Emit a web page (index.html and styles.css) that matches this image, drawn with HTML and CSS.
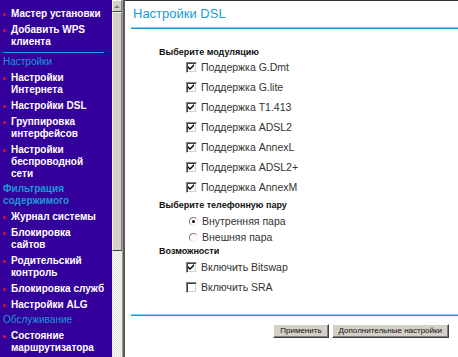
FILE: index.html
```html
<!DOCTYPE html>
<html lang="ru">

<head>
    <meta charset="UTF-8">
    <title>Настройки DSL</title>
    <link rel="stylesheet" href="styles.css">
</head>

<body>
    <div id="sidebar">
        <div class="nav-item"><span class="bullet"></span><a href="#">Мастер установки</a></div>
        <div class="nav-item"><span class="bullet"></span><a href="#">Добавить WPS<br>клиента</a></div>
        <div class="nav-sep"></div>
        <div class="nav-head">Настройки</div>
        <div class="nav-item"><span class="bullet"></span><a href="#">Настройки<br>Интернета</a></div>
        <div class="nav-item"><span class="bullet"></span><a href="#">Настройки DSL</a></div>
        <div class="nav-item"><span class="bullet"></span><a href="#">Группировка<br>интерфейсов</a></div>
        <div class="nav-item"><span class="bullet"></span><a href="#">Настройки<br>беспроводной<br>сети</a></div>
        <div class="nav-head bold">Фильтрация<br>содержимого</div>
        <div class="nav-item"><span class="bullet"></span><a href="#">Журнал системы</a></div>
        <div class="nav-item"><span class="bullet"></span><a href="#">Блокировка<br>сайтов</a></div>
        <div class="nav-item"><span class="bullet"></span><a href="#">Родительский<br>контроль</a></div>
        <div class="nav-item"><span class="bullet"></span><a href="#">Блокировка служб</a></div>
        <div class="nav-item"><span class="bullet"></span><a href="#">Настройки ALG</a></div>
        <div class="nav-head">Обслуживание</div>
        <div class="nav-item"><span class="bullet"></span><a href="#">Состояние<br>маршрутизатора</a></div>
    </div>

    <div id="scrollbar">
        <div class="sb-btn"><span class="sb-arrow"></span></div>
        <div class="sb-thumb"></div>
        <div class="sb-track"></div>
    </div>
    <div id="divider"></div>

    <div id="main">
        <div class="page-title">Настройки DSL</div>
        <div class="rule"></div>

        <div class="form">
            <div class="label">Выберите модуляцию</div>
            <div class="opt"><span class="cb"><svg viewBox="0 0 9 9"><polygon points="1,3 3,5 7,1 7,3 3,7 1,5"/></svg></span>Поддержка G.Dmt</div>
            <div class="opt"><span class="cb"><svg viewBox="0 0 9 9"><polygon points="1,3 3,5 7,1 7,3 3,7 1,5"/></svg></span>Поддержка G.lite</div>
            <div class="opt"><span class="cb"><svg viewBox="0 0 9 9"><polygon points="1,3 3,5 7,1 7,3 3,7 1,5"/></svg></span>Поддержка T1.413</div>
            <div class="opt"><span class="cb"><svg viewBox="0 0 9 9"><polygon points="1,3 3,5 7,1 7,3 3,7 1,5"/></svg></span>Поддержка ADSL2</div>
            <div class="opt"><span class="cb"><svg viewBox="0 0 9 9"><polygon points="1,3 3,5 7,1 7,3 3,7 1,5"/></svg></span>Поддержка AnnexL</div>
            <div class="opt"><span class="cb"><svg viewBox="0 0 9 9"><polygon points="1,3 3,5 7,1 7,3 3,7 1,5"/></svg></span>Поддержка ADSL2+</div>
            <div class="opt"><span class="cb"><svg viewBox="0 0 9 9"><polygon points="1,3 3,5 7,1 7,3 3,7 1,5"/></svg></span>Поддержка AnnexM</div>

            <div class="label lbl-pair">Выберите телефонную пару</div>
            <div class="opt radio-row"><span class="rb checked"></span>Внутренняя пара</div>
            <div class="opt radio-row"><span class="rb"></span>Внешняя пара</div>

            <div class="label lbl-caps">Возможности</div>
            <div class="opt"><span class="cb"><svg viewBox="0 0 9 9"><polygon points="1,3 3,5 7,1 7,3 3,7 1,5"/></svg></span>Включить Bitswap</div>
            <div class="opt"><span class="cb"></span>Включить SRA</div>
        </div>

        <div class="rule rule-bottom"></div>
        <div class="buttons">
            <button class="btn">Применить</button>
            <button class="btn">Дополнительные настройки</button>
        </div>
    </div>
</body>

</html>
```

FILE: styles.css
```css
body {
    margin: 0;
    display: flex;
    height: 357px;
    overflow: hidden;
    font-family: 'Liberation Sans', Arial, sans-serif;
    background: #ffffff;
}

#sidebar {
    width: 112px;
    flex-shrink: 0;
    background-color: #33009c;
    padding-top: 4px;
    box-sizing: border-box;
}

.nav-item {
    display: flex;
    align-items: flex-start;
    margin-top: 4px;
    line-height: 12px;
}

.nav-item a {
    color: #ffffff;
    text-decoration: none;
    font-size: 10px;
    font-weight: bold;
    white-space: nowrap;
}

.bullet {
    width: 3px;
    height: 3px;
    border-radius: 50%;
    background-color: #e0103c;
    margin: 5px 5px 0 3px;
    flex-shrink: 0;
}

.nav-sep {
    height: 1px;
    margin: 4px 8px 0 3px;
    background-color: #1aa0d8;
}

.nav-head {
    color: #1a9ad6;
    font-size: 10px;
    line-height: 12px;
    margin-top: 3px;
    padding-left: 3px;
}

.nav-head.bold {
    font-weight: bold;
}

#scrollbar {
    width: 10px;
    flex-shrink: 0;
    display: flex;
    flex-direction: column;
}

.sb-btn {
    height: 12px;
    box-sizing: border-box;
    background: #d4d0c8;
    border-top: 1px solid #f4f4f0;
    border-left: 1px solid #f4f4f0;
    border-right: 1px solid #808080;
    border-bottom: 1px solid #404040;
    display: flex;
    align-items: center;
    justify-content: center;
}

.sb-arrow {
    width: 0;
    height: 0;
    border-left: 3px solid transparent;
    border-right: 3px solid transparent;
    border-bottom: 3px solid #808080;
}

.sb-thumb {
    height: 239px;
    box-sizing: border-box;
    background: #d4d0c8;
    border-top: 1px solid #f4f4f0;
    border-left: 1px solid #f4f4f0;
    border-right: 1px solid #808080;
    border-bottom: 1px solid #404040;
}

.sb-track {
    flex-grow: 1;
    background: repeating-conic-gradient(#e4e2dc 0 25%, #f6f6f2 0 50%) 0 0 / 2px 2px;
}

#divider {
    width: 3px;
    flex-shrink: 0;
    background: #5a5a5a;
    border-left: 1px solid #9a9a9a;
    box-sizing: border-box;
}

#main {
    flex-grow: 1;
    display: flex;
    flex-direction: column;
    border-top: 1px solid #333333;
}

.page-title {
    height: 26px;
    line-height: 26px;
    padding-left: 8px;
    color: #1a9ad6;
    font-size: 13px;
}

.rule {
    height: 1px;
    margin-left: 6px;
    background: #0a96d6;
    border-top: 1px solid #8cd2f0;
}

.form {
    padding: 18px 0 0 34px;
    font-size: 10.5px;
    color: #333333;
}

.label {
    height: 10px;
    line-height: 10px;
    font-size: 9px;
    font-weight: bold;
    color: #111111;
}

.lbl-pair {
    height: 16px;
    line-height: 16px;
}

.lbl-caps {
    height: 12px;
    line-height: 12px;
}

.opt {
    height: 20px;
    display: flex;
    align-items: center;
    padding-left: 27px;
}

.radio-row {
    height: 16px;
}

.cb {
    width: 11px;
    height: 11px;
    box-sizing: border-box;
    border-top: 1px solid #808080;
    border-left: 1px solid #808080;
    border-right: 1px solid #ffffff;
    border-bottom: 1px solid #ffffff;
    box-shadow: inset 1px 1px 0 #404040, inset -1px -1px 0 #d4d0c8;
    background: #ffffff;
    margin-right: 4px;
    display: flex;
}

.cb svg {
    width: 9px;
    height: 9px;
    fill: #000000;
}

.rb {
    width: 9px;
    height: 9px;
    box-sizing: border-box;
    border-radius: 50%;
    border: 1px solid #808080;
    border-right-color: #e8e8e8;
    border-bottom-color: #e8e8e8;
    background: #ffffff;
    margin: 0 4px 0 3px;
    display: flex;
    align-items: center;
    justify-content: center;
}

.rb.checked::after {
    content: "";
    width: 3px;
    height: 3px;
    border-radius: 50%;
    background: #000;
}

.rule-bottom {
    margin-top: 17px;
}

.buttons {
    display: flex;
    justify-content: flex-end;
    gap: 3px;
    padding: 8px 9px 0 0;
}

.btn {
    font-family: 'Liberation Sans', Arial, sans-serif;
    font-size: 8px;
    color: #111111;
    height: 14px;
    padding: 0 6px;
    background: #d4d0c8;
    border-top: 1px solid #ffffff;
    border-left: 1px solid #ffffff;
    border-right: 1px solid #404040;
    border-bottom: 1px solid #404040;
    box-shadow: inset -1px -1px 0 #808080;
    line-height: 12px;
}
```
